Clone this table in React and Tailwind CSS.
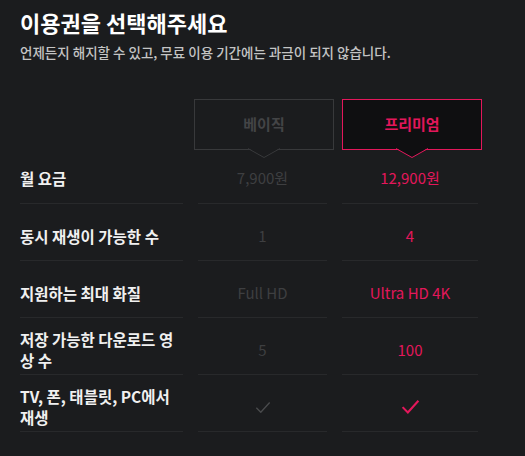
const rows = [
    { label: '월 요금', basic: '7,900원', premium: '12,900원' },
    { label: '동시 재생이 가능한 수', basic: '1', premium: '4' },
    { label: '지원하는 최대 화질', basic: 'Full HD', premium: 'Ultra HD 4K' },
    { label: '저장 가능한 다운로드 영상 수', basic: '5', premium: '100' },
    { label: 'TV, 폰, 태블릿, PC에서 재생', check: true },
];

const Check = ({ color, size = 18, width = 2 }) => (
    <svg width={size} height={size * 0.8} viewBox="0 0 18 14" fill="none">
        <polyline points="1.5,7.5 6.5,12.5 16.5,1.5" stroke={color} strokeWidth={width} />
    </svg>
);

const PlanBox = ({ name, active }) => (
    <div
        className={
            active
                ? 'relative w-[140px] h-[51px] border border-[#e3175b] bg-[#0f0f11] flex items-center justify-center text-[15px] font-bold text-[#e3175b]'
                : 'relative w-[140px] h-[51px] border border-[#38393b] bg-[#1b1c1e] flex items-center justify-center text-[15px] font-bold text-[#434446]'
        }
    >
        {name}
        {/* speech-bubble tail */}
        <svg
            className="absolute left-1/2 -translate-x-1/2 top-full -mt-[1px]"
            width="32"
            height="11"
            viewBox="0 0 32 11"
        >
            <polygon points="0,0 16,9 32,0" fill={active ? '#0f0f11' : '#1b1c1e'} />
            <polyline points="0,0.5 16,9.5 32,0.5" fill="none" stroke={active ? '#e3175b' : '#38393b'} strokeWidth="1" />
        </svg>
    </div>
);

const App = () => {
    return (
        <div
            className="w-[525px] h-[456px] bg-[#1b1c1e] pl-[20px] pt-[6px] overflow-hidden"
            style={{ fontFamily: '"Noto Sans CJK KR", "Noto Sans", sans-serif' }}
        >
            <h1 className="text-[22px] font-bold leading-[32px] text-white">이용권을 선택해주세요</h1>
            <p className="mt-[5px] text-[13.5px] font-medium leading-[18px] text-[#c4c4c4]">
                언제든지 해지할 수 있고, 무료 이용 기간에는 과금이 되지 않습니다.
            </p>

            {/* plan header */}
            <div className="mt-[38px] flex">
                <div className="w-[174px]" />
                <PlanBox name="베이직" />
                <div className="w-[8px]" />
                <PlanBox name="프리미엄" active />
            </div>

            {/* comparison rows */}
            <div className="grid grid-cols-[163px_129px_136px] gap-x-[15px]">
                {rows.map((r, i) => {
                    const cell = i === 0 ? 'h-[54px] pt-[4px]' : 'h-[57px] pt-[8px]';
                    return [
                        <div
                            key={`l${i}`}
                            className={`${cell} flex items-center border-b border-[#28292b] text-[15.5px] font-bold leading-[21px] text-[#f0f0f0]`}
                        >
                            <span className="w-[160px]">{r.label}</span>
                        </div>,
                        <div
                            key={`b${i}`}
                            className={`${cell} flex items-center justify-center border-b border-[#28292b] text-[15px] text-[#3e3f41]`}
                        >
                            {r.check ? <Check color="#4a4b4d" size={16} width={1.5} /> : r.basic}
                        </div>,
                        <div
                            key={`p${i}`}
                            className={`${cell} flex items-center justify-center border-b border-[#28292b] text-[15px] text-[#e3175b]`}
                        >
                            {r.check ? <Check color="#e3175b" size={19} width={2} /> : r.premium}
                        </div>,
                    ];
                })}
            </div>
        </div>
    );
};

export default App;
